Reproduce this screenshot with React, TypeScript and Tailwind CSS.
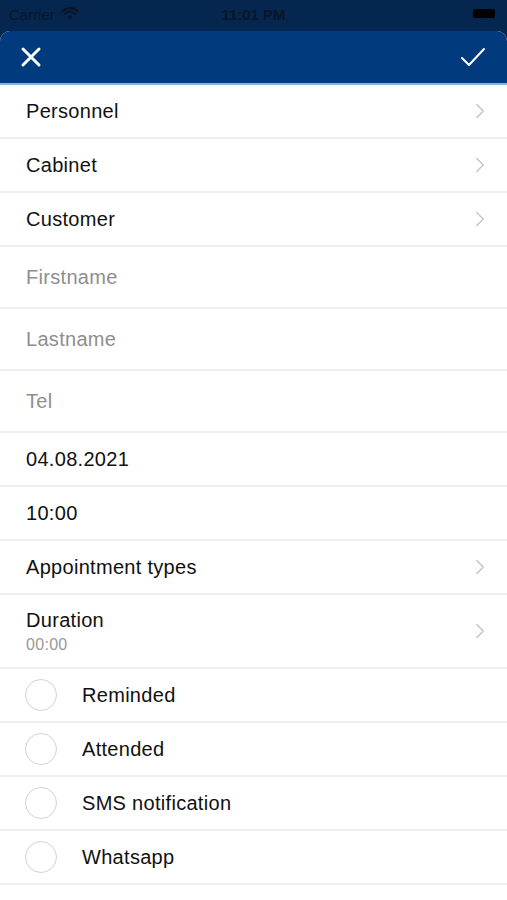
import { ChevronRight } from 'lucide-react';

const font = { fontFamily: '"Liberation Sans", Arial, sans-serif' };

function Chevron() {
  return <ChevronRight className="w-[26px] h-[26px] text-[#c4c4c8]" strokeWidth={1.3} />;
}

function NavRow({ label }: { label: string }) {
  return (
    <div className="flex items-center justify-between pl-[26px] pr-[14px] border-b-2 border-[#efefef] h-[54px]">
      <span className="text-[20px] tracking-[0.3px] text-[#111]">{label}</span>
      <Chevron />
    </div>
  );
}

function InputRow({ placeholder }: { placeholder: string }) {
  return (
    <div className="flex items-center pl-[26px] border-b-2 border-[#efefef] h-[62px]">
      <span className="text-[20px] tracking-[0.3px] text-[#8e8e8e]">{placeholder}</span>
    </div>
  );
}

function ValueRow({ value }: { value: string }) {
  return (
    <div className="flex items-center pl-[26px] border-b-2 border-[#efefef] h-[54px]">
      <span className="text-[20px] tracking-[0.3px] text-[#111]">{value}</span>
    </div>
  );
}

function CheckRow({ label }: { label: string }) {
  return (
    <div className="flex items-center pl-[25px] border-b-2 border-[#efefef] h-[54px]">
      <div className="w-[32px] h-[32px] rounded-full border-[1.5px] border-[#d2d2d2]" />
      <span className="ml-[25px] text-[20px] tracking-[0.3px] text-[#111]">{label}</span>
    </div>
  );
}

export default function App() {
  return (
    <div className="w-[507px] h-[900px] bg-[#05264f] overflow-hidden" style={font}>
      {/* status bar */}
      <div className="relative h-[31px] flex items-center px-[9px]">
        <span className="text-[15px] text-[#0a1628]">Carrier</span>
        <svg className="ml-[6px] -mt-[4px]" width="18" height="13" viewBox="0 0 18 13">
          <path d="M9 12.5 L6.3 9.6 A3.8 3.8 0 0 1 11.7 9.6 Z" fill="#0a1628" />
          <path d="M3.6 6.9 A7.6 7.6 0 0 1 14.4 6.9" stroke="#0a1628" strokeWidth="2.2" fill="none" strokeLinecap="round" />
          <path d="M1.2 4.3 A11 11 0 0 1 16.8 4.3" stroke="#0a1628" strokeWidth="2.2" fill="none" strokeLinecap="round" />
        </svg>
        <span className="absolute left-1/2 -translate-x-1/2 text-[15px] font-bold text-[#0a1628]">11:01 PM</span>
        <div className="absolute right-[12px] top-[9px] w-[22px] h-[9px] rounded-[2px] bg-black" />
      </div>

      {/* sheet */}
      <div className="rounded-t-[10px] bg-white h-[869px] overflow-hidden">
        <div className="h-[54px] bg-[#023b7d] flex items-center justify-between px-[20px] border-b-2 border-[#8fb0d8]">
          <svg width="22" height="22" viewBox="0 0 22 22">
            <path d="M3 3 L19 19 M19 3 L3 19" stroke="white" strokeWidth="3" strokeLinecap="round" />
          </svg>
          <svg width="28" height="22" viewBox="0 0 28 22">
            <path d="M3 12 L10 19 L25 3" stroke="white" strokeWidth="2" fill="none" strokeLinecap="round" strokeLinejoin="round" />
          </svg>
        </div>

        <NavRow label="Personnel" />
        <NavRow label="Cabinet" />
        <NavRow label="Customer" />
        <InputRow placeholder="Firstname" />
        <InputRow placeholder="Lastname" />
        <InputRow placeholder="Tel" />
        <ValueRow value="04.08.2021" />
        <ValueRow value="10:00" />
        <NavRow label="Appointment types" />
        <div className="flex items-center justify-between pl-[26px] pr-[14px] border-b-2 border-[#efefef] h-[74px]">
          <div className="flex flex-col">
            <span className="text-[20px] leading-6 tracking-[0.3px] text-[#111]">Duration</span>
            <span className="text-[16px] leading-5 tracking-[0.3px] text-[#999] mt-[3px]">00:00</span>
          </div>
          <Chevron />
        </div>
        <CheckRow label="Reminded" />
        <CheckRow label="Attended" />
        <CheckRow label="SMS notification" />
        <CheckRow label="Whatsapp" />
      </div>
    </div>
  );
}
